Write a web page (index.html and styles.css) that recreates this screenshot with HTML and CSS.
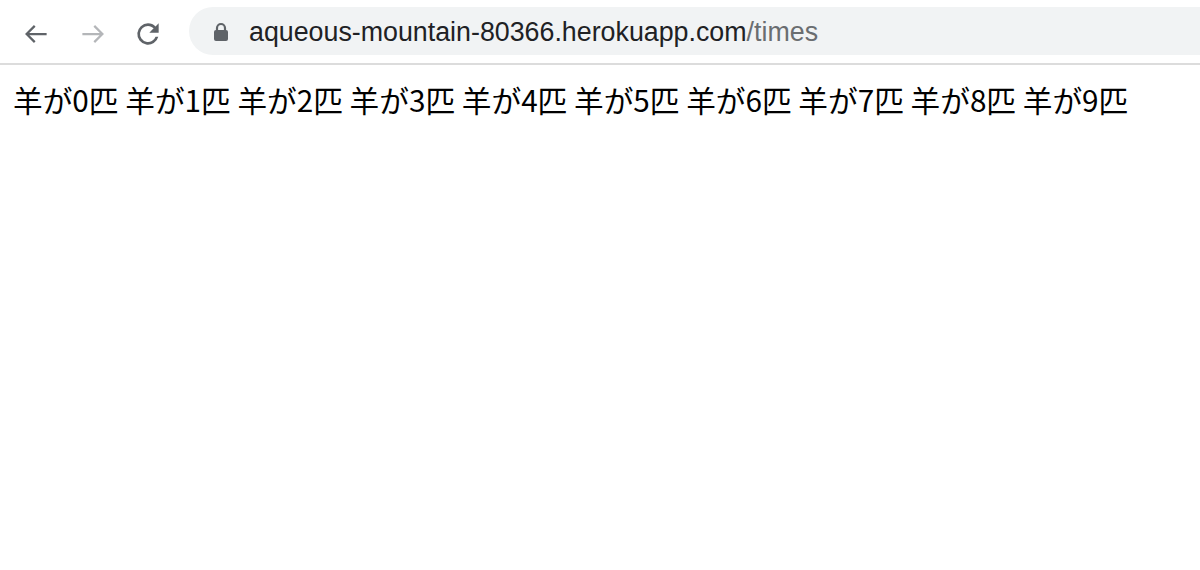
FILE: index.html
```html
<!DOCTYPE html>
<html lang="ja">
<head>
    <meta charset="UTF-8">
    <title>times</title>
    <link rel="stylesheet" href="styles.css">
</head>
<body>
    <div class="toolbar">
        <div class="nav-buttons">
            <span class="nav-btn back">
                <svg width="30" height="30" viewBox="0 0 24 24"><path d="M20.5 12H4.5M11 5.5L4.5 12l6.5 6.5" fill="none" stroke="#5f6368" stroke-width="1.8"/></svg>
            </span>
            <span class="nav-btn forward">
                <svg width="30" height="30" viewBox="0 0 24 24"><path d="M3.5 12h16M13 5.5l6.5 6.5-6.5 6.5" fill="none" stroke="#b4b6b9" stroke-width="1.8"/></svg>
            </span>
            <span class="nav-btn reload">
                <svg width="32" height="32" viewBox="0 0 24 24"><path d="M17.65 6.35A7.96 7.96 0 0 0 12 4a8 8 0 1 0 7.73 10h-2.08A6 6 0 1 1 12 6c1.66 0 3.14.69 4.22 1.78L13 11h7V4l-2.35 2.35z" fill="#5f6368"/></svg>
            </span>
        </div>
        <div class="omnibox">
            <svg class="lock" width="16" height="20" viewBox="0 0 16 20"><path d="M4 8V6a4 4 0 0 1 8 0v2" fill="none" stroke="#5f6368" stroke-width="2.2"/><rect x="1" y="8" width="14" height="11" rx="2" fill="#5f6368"/></svg>
            <span class="url">aqueous-mountain-80366.herokuapp.com<span class="path">/times</span></span>
        </div>
    </div>

    <div class="page">
        羊が0匹 羊が1匹 羊が2匹 羊が3匹 羊が4匹 羊が5匹 羊が6匹 羊が7匹 羊が8匹 羊が9匹
    </div>
</body>
</html>
```

FILE: styles.css
```css
body {
    margin: 0;
    background-color: #ffffff;
}
.toolbar {
    display: flex;
    align-items: center;
    height: 65px;
    border-bottom: 2px solid #dcdcdc;
    box-sizing: border-box;
}
.nav-buttons {
    display: flex;
    align-items: center;
    flex-shrink: 0;
    padding-left: 21px;
    padding-top: 4px;
    width: 189px;
    box-sizing: border-box;
}
.nav-btn {
    display: flex;
    align-items: center;
    justify-content: center;
}
.back {
    margin-right: 27px;
}
.forward {
    margin-right: 24px;
}
.omnibox {
    flex: 1;
    display: flex;
    align-items: center;
    height: 48px;
    margin-bottom: 1px;
    background-color: #f1f3f4;
    border-radius: 24px 0 0 24px;
    padding-left: 24px;
    padding-top: 2px;
    box-sizing: border-box;
}
.lock {
    margin-right: 20px;
}
.url {
    font-family: "Liberation Sans", Arial, sans-serif;
    font-size: 26.8px;
    color: #202124;
}
.url .path {
    color: #6a6d70;
}
.page {
    padding: 17px 13px;
    font-family: "Noto Sans CJK JP", sans-serif;
    font-size: 29.7px;
    color: #000000;
    line-height: 1.2;
}
```
